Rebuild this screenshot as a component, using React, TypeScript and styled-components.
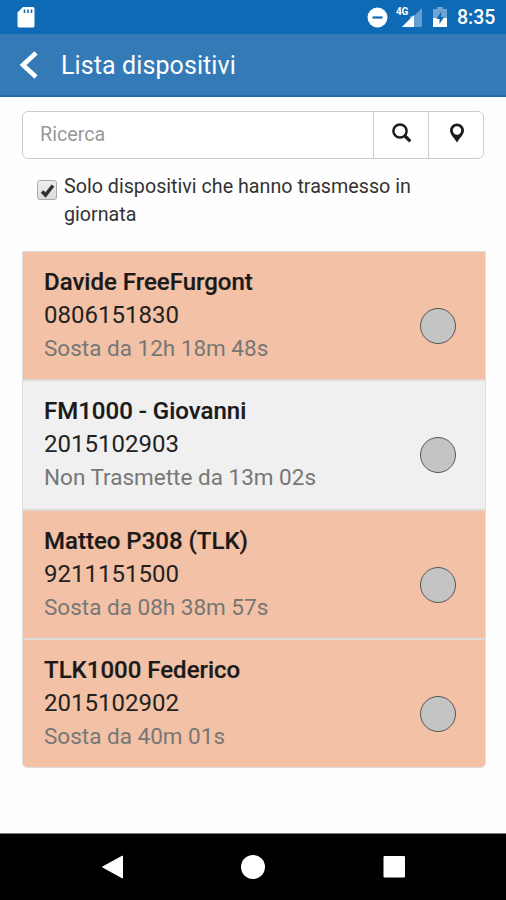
import React from "react";
import styled, { createGlobalStyle } from "styled-components";

const GlobalStyle = createGlobalStyle`
  * { box-sizing: border-box; }
  body { margin: 0; background: #fff; font-family: Roboto, sans-serif; color: #222; }
`;

const Screen = styled.div`
  display: flex;
  flex-direction: column;
  width: 506px;
  height: 900px;
  background: #fefefe;
  overflow: hidden;
`;

const StatusBar = styled.div`
  display: flex;
  flex: none;
  height: 34px;
  padding: 0 10px 0 17px;
  align-items: center;
  background: #0f6ab5;
  color: #fff;

  svg { display: block; flex: none; }
`;

const StatusIcons = styled.div`
  display: flex;
  margin-left: auto;
  align-items: center;
`;

const Signal = styled.div`
  display: flex;
  margin-left: 8px;
  margin-right: 11px;
  width: 26px;
  height: 22px;
  align-items: flex-start;
`;

const NetworkType = styled.span`
  flex: none;
  width: 13px;
  font-size: 10px;
  line-height: 12px;
  font-weight: 700;
  letter-spacing: -0.2px;
  margin-right: -7px;
  white-space: nowrap;
`;

const Clock = styled.span`
  margin-left: 10px;
  padding-top: 2px;
  font-size: 19.5px;
  line-height: 24px;
  font-weight: 500;
  width: 39px;
  white-space: nowrap;
`;

const Header = styled.header`
  display: flex;
  flex: none;
  height: 63px;
  padding-left: 19px;
  align-items: center;
  background: #337ab7;
  border-bottom: 2px solid #1d6cae;
  color: #fff;
`;

const Title = styled.h1`
  margin: 2px 0 0 23px;
  font-size: 25px;
  line-height: 32px;
  font-weight: 400;
  letter-spacing: 0.1px;
`;

const Content = styled.main`
  display: flex;
  flex-direction: column;
  flex: 1;
  padding: 14px 21px 0 22px;
`;

const SearchGroup = styled.div`
  display: flex;
  flex: none;
  width: 462px;
  height: 48px;
  border: 1.5px solid #ccc;
  border-radius: 6px;
  background: #fff;
`;

const SearchInput = styled.input`
  flex: 1;
  min-width: 0;
  border: 0;
  outline: 0;
  padding: 0 17px 1px;
  background: transparent;
  font: 400 19.7px Roboto, sans-serif;

  &::placeholder { color: #999; opacity: 1; }
`;

const SearchButton = styled.button`
  display: flex;
  width: 55px;
  padding: 0 0 4px 1px;
  align-items: center;
  justify-content: center;
  border: 0;
  border-left: 1.5px solid #ccc;
  background: transparent;
  color: #1c1c1c;
`;

const Filter = styled.label`
  display: flex;
  height: 92px;
  padding: 14px 0 0 15px;
  font-size: 19.7px;
  line-height: 28px;
  color: #333;
`;

const CheckMark = styled.span`
  display: flex;
  flex: none;
  width: 20px;
  height: 20px;
  margin: 7px 7px 0 0;
  align-items: center;
  justify-content: center;
  border: 1.5px solid #aaa;
  border-radius: 3px;
  background: linear-gradient(#efefef, #dcdcdc);
`;

const FilterText = styled.span`
  width: 370px;
`;

const DeviceList = styled.ul`
  margin: 0;
  padding: 0;
  width: 464px;
  height: 517px;
  display: flex;
  flex-direction: column;
  list-style: none;
  border: 1px solid #ddd;
  border-radius: 1px 1px 5px 5px;
  overflow: hidden;
`;

const DeviceRow = styled.li<{ $active: boolean }>`
  display: flex;
  flex: 1;
  padding: 0 29px 0 21px;
  align-items: center;
  justify-content: space-between;
  background: ${({ $active }) => ($active ? "#f3c1a5" : "#f0f0f0")};

  & + & { border-top: 2px solid #dcdad9; }
`;

const DeviceInfo = styled.div`
  display: flex;
  flex-direction: column;
  line-height: 33px;
  white-space: nowrap;
`;

const DeviceName = styled.strong`
  font-size: 24px;
  font-weight: 500;
  color: #1a1a1a;
  -webkit-text-stroke: 0.2px #1a1a1a;
`;

const DeviceCode = styled.span`
  font-size: 24px;
  color: #222;
`;

const DeviceState = styled.span`
  font-size: 22.5px;
  color: #777;
`;

const StateDot = styled.span`
  width: 36px;
  height: 36px;
  margin-top: 21px;
  border: 1.5px solid #555;
  border-radius: 50%;
  background: #c4c4c4;
`;

const NavBar = styled.nav`
  display: flex;
  flex: none;
  height: 67px;
  padding-bottom: 1px;
  align-items: center;
  justify-content: center;
  gap: 117px;
  border-top: 1px solid #777;
  background: #000;
`;

const devices = [
  { name: "Davide FreeFurgont", code: "0806151830", state: "Sosta da 12h 18m 48s", active: true },
  { name: "FM1000 - Giovanni", code: "2015102903", state: "Non Trasmette da 13m 02s", active: false },
  { name: "Matteo P308 (TLK)", code: "9211151500", state: "Sosta da 08h 38m 57s", active: true },
  { name: "TLK1000 Federico", code: "2015102902", state: "Sosta da 40m 01s", active: true },
];

export default function App() {
  return (
    <>
      <GlobalStyle />
      <Screen>
        <StatusBar>
          <svg width="18" height="21" viewBox="0 0 18 21">
            <path d="M6 0H16Q17.500 0 17.500 1.500V19Q17.500 20.500 16 20.500H2Q.5 20.500 .5 19V5.500Z" fill="#fff" />
            <path d="M7.500 2.500V6M11 2.500V6M14.500 2.500V6" stroke="#0f6ab5" strokeWidth="1.600" />
          </svg>
          <StatusIcons>
            <svg width="21" height="21" viewBox="0 0 21 21">
              <circle cx="10.500" cy="10.500" r="10" fill="#fff" />
              <path d="M5.500 10.500H15.500" stroke="#0f6ab5" strokeWidth="2.200" />
            </svg>
            <Signal>
              <NetworkType>4G</NetworkType>
              <svg width="20" height="22" viewBox="0 0 20 22">
                <path d="M20 2V21H0L8 13V10H12Z" fill="#fff" opacity=".35" />
                <path d="M12 9V21H0Z" fill="#fff" />
              </svg>
            </Signal>
            <svg width="14" height="22" viewBox="0 0 14 22">
              <path d="M0 3H4V1H10V3H14V12H0Z" fill="#fff" opacity=".4" />
              <path d="M0 12H14V21H0Z" fill="#fff" />
              <path d="M8.500 5L3.500 13H6.500V18L11 11H8Z" fill="#0f6ab5" />
            </svg>
            <Clock>8:35</Clock>
          </StatusIcons>
        </StatusBar>
        <Header>
          <svg width="19" height="28" viewBox="0 0 19 28">
            <path d="M17 2L4 14L17 26" fill="none" stroke="#fff" strokeWidth="4.600" />
          </svg>
          <Title>Lista dispositivi</Title>
        </Header>
        <Content>
          <SearchGroup>
            <SearchInput placeholder="Ricerca" />
            <SearchButton aria-label="Cerca">
              <svg width="20" height="20" viewBox="0 0 20 20">
                <circle cx="8" cy="8" r="6.600" fill="none" stroke="currentColor" strokeWidth="2.500" />
                <path d="M12.500 12.500L18.300 18.300" stroke="currentColor" strokeWidth="3.200" />
              </svg>
            </SearchButton>
            <SearchButton aria-label="Mappa">
              <svg width="16" height="20" viewBox="0 0 16 20">
                <path fillRule="evenodd" d="M8 .5A7 7 0 0 0 1 7.500C1 11.500 5 14.500 8 19.500C11 14.500 15 11.500 15 7.500A7 7 0 0 0 8 .5ZM8 3.300A4.200 4.200 0 1 1 8 11.700A4.200 4.200 0 0 1 8 3.300Z" fill="currentColor" />
              </svg>
            </SearchButton>
          </SearchGroup>
          <Filter>
            <CheckMark>
              <svg width="15" height="15" viewBox="0 0 15 15">
                <path d="M2 8.500L5.500 12L13 2.500" fill="none" stroke="#333" strokeWidth="3.600" />
              </svg>
            </CheckMark>
            <FilterText>Solo dispositivi che hanno trasmesso in giornata</FilterText>
          </Filter>
          <DeviceList>
            {devices.map((device) => (
              <DeviceRow key={device.name} $active={device.active}>
                <DeviceInfo>
                  <DeviceName>{device.name}</DeviceName>
                  <DeviceCode>{device.code}</DeviceCode>
                  <DeviceState>{device.state}</DeviceState>
                </DeviceInfo>
                <StateDot />
              </DeviceRow>
            ))}
          </DeviceList>
        </Content>
        <NavBar>
          <svg width="24" height="24" viewBox="0 0 24 24">
            <path d="M22.500 1V23L2.500 12Z" fill="#fff" stroke="#fff" strokeLinejoin="round" />
          </svg>
          <svg width="24" height="24" viewBox="0 0 24 24">
            <circle cx="12" cy="12" r="12" fill="#fff" />
          </svg>
          <svg width="24" height="24" viewBox="0 0 24 24">
            <rect x="1.500" y="1" width="21.500" height="21.500" rx="1" fill="#fff" />
          </svg>
        </NavBar>
      </Screen>
    </>
  );
}
